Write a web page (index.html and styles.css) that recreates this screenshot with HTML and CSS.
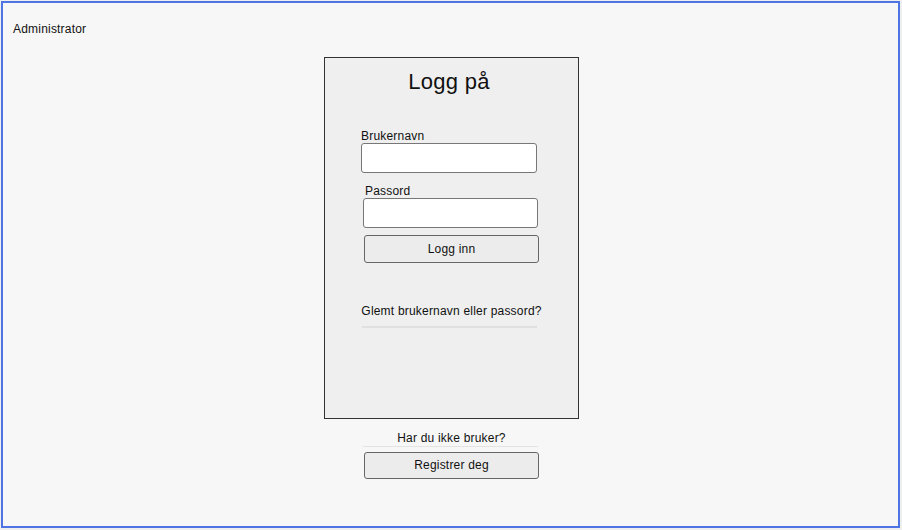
FILE: index.html
```html
<!DOCTYPE html>
<html lang="no">
<head>
<meta charset="utf-8">
<title>Logg på</title>
<link rel="stylesheet" href="styles.css">
</head>
<body>
<div class="frame">
  <div class="admin">Administrator</div>
  <div class="column">
    <div class="card">
      <h1 class="title">Logg på</h1>
      <label class="label label-user">Brukernavn</label>
      <div class="input input-user"></div>
      <label class="label label-pass">Passord</label>
      <div class="input input-pass"></div>
      <div class="button btn-login">Logg inn</div>
      <div class="link">Glemt brukernavn eller passord?</div>
      <div class="rule rule-forgot"></div>
    </div>
    <div class="link link-register">Har du ikke bruker?</div>
    <div class="rule rule-register"></div>
    <div class="button btn-register">Registrer deg</div>
  </div>
</div>
</body>
</html>
```

FILE: styles.css
```css
html, body {
  margin: 0;
  padding: 0;
  background: #efefef;
}
body {
  width: 902px;
  height: 530px;
  font-family: "Liberation Sans", Arial, sans-serif;
  color: #111;
  font-size: 12px;
  letter-spacing: 0.2px;
}
.frame {
  box-sizing: border-box;
  margin: 1px 0 0 1px;
  width: 899px;
  height: 527px;
  border: 2px solid #4f74e3;
  background: #f7f7f7;
  padding: 19px 0 0 10px;
}
.admin {
  line-height: 14px;
  height: 14px;
}
.column {
  margin: 21px 0 0 311px;
  width: 255px;
  display: flex;
  flex-direction: column;
}
.card {
  box-sizing: border-box;
  width: 255px;
  height: 362px;
  border: 1px solid #333;
  background: #efefef;
  display: flex;
  flex-direction: column;
}
.title {
  margin: 11px 0 0 0;
  font-weight: normal;
  font-size: 22px;
  line-height: 26px;
  letter-spacing: 0.3px;
  text-align: center;
  padding-right: 5px;
}
.label {
  display: block;
  line-height: 13px;
  height: 13px;
}
.label-user {
  margin: 35px 0 0 36px;
}
.label-pass {
  margin: 12px 0 0 40px;
}
.input {
  box-sizing: border-box;
  height: 30px;
  background: #fff;
  border: 1px solid #777;
  border-radius: 3px;
}
.input-user {
  margin-left: 36px;
  width: 176px;
}
.input-pass {
  margin-left: 38px;
  width: 175px;
}
.button {
  box-sizing: border-box;
  width: 175px;
  background: #ececec;
  border: 1px solid #666;
  border-radius: 3px;
  text-align: center;
}
.btn-login {
  margin: 7px 0 0 39px;
  height: 28px;
  line-height: 26px;
}
.link {
  margin-top: 41px;
  line-height: 14px;
  text-align: center;
}
.rule {
  height: 2px;
  background: #e0e0e0;
}
.rule-forgot {
  margin: 8px 0 0 37px;
  width: 175px;
}
.link-register {
  margin-top: 12px;
}
.rule-register {
  margin: 1px 0 0 39px;
  width: 175px;
  height: 1px;
  background: #e3e3e3;
}
.btn-register {
  margin: 5px 0 0 40px;
  height: 27px;
  line-height: 25px;
}
```
